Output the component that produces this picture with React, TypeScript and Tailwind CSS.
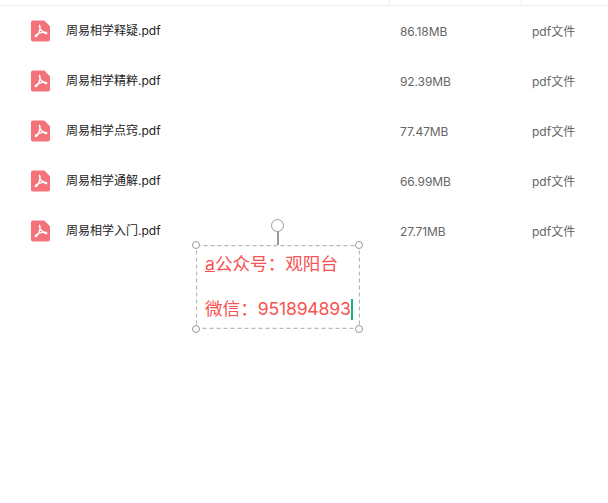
const files = [
  { name: '周易相学释疑.pdf', size: '86.18MB' },
  { name: '周易相学精粹.pdf', size: '92.39MB' },
  { name: '周易相学点窍.pdf', size: '77.47MB' },
  { name: '周易相学通解.pdf', size: '66.99MB' },
  { name: '周易相学入门.pdf', size: '27.71MB' },
];

function PdfIcon() {
  return (
    <svg width="19" height="22" viewBox="0 0 20 22" className="shrink-0">
      <path d="M2 0H14L20 6V20a2 2 0 0 1-2 2H2a2 2 0 0 1-2-2V2a2 2 0 0 1 2-2Z" fill="#f4737b" />
      <path
        d="M9 5c-.6 2.500 1.200 5.500 5.600 8.300 1.200.8 2.300.3 1.800-.4-.7-.8-3.800-.8-8.100.5-2.500.8-4.300 2.600-3.800 3.300.6.700 2.300-.4 3.500-3.400C9.300 10 10.100 6.500 9 5Z"
        fill="none"
        stroke="#fff"
        strokeWidth="1.400"
        strokeLinejoin="round"
      />
    </svg>
  );
}

function Handle({ className }: { className: string }) {
  return <span className={`absolute h-2 w-2 rounded-full border-[1.500px] border-[#999] bg-white ${className}`} />;
}

export default function App() {
  return (
    <div className="relative h-[503px] w-[608px] overflow-hidden bg-white font-['Inter','Noto_Sans_CJK_SC',sans-serif]">
      <div className="flex h-[6px] border-b border-[#eeeeee]">
        <div className="w-[390px] border-r border-[#eeeeee]" />
        <div className="w-[132px] border-r border-[#eeeeee]" />
      </div>

      {files.map((file) => (
        <div key={file.name} className="flex h-[50px] items-center">
          <div className="flex w-[390px] items-center pl-[31px]">
            <PdfIcon />
            <span className="ml-4 text-xs text-[#222]">{file.name}</span>
          </div>
          <div className="w-[132px] pl-[10px] pt-px text-xs tracking-[-0.1px] text-[#666]">{file.size}</div>
          <div className="pl-[10px] pt-px text-xs text-[#666]">pdf文件</div>
        </div>
      ))}

      <div className="absolute left-[196px] top-[245px] h-[84px] w-[163px]">
        <svg width="164" height="84" className="absolute left-0 top-0">
          <rect x="0.500" y="0.500" width="163" height="83" fill="none" stroke="#b8b8b8" strokeWidth="1.300" strokeDasharray="4 3" />
        </svg>
        <Handle className="-left-[4px] -top-[4px]" />
        <Handle className="-right-[4px] -top-[4px]" />
        <Handle className="-bottom-[4px] -left-[4px]" />
        <Handle className="-bottom-[4px] -right-[4px]" />
        <span className="absolute -top-[14px] left-[81px] h-[14px] w-[1.500px] bg-[#999]" />
        <span className="absolute -top-[26px] left-[75px] h-[13px] w-[13px] rounded-full border-[1.500px] border-[#999] bg-white" />
        <div className="relative whitespace-nowrap pl-[9px] pt-[6px] text-[17.600px] leading-[26px] text-[#f85252]">
          <div className="h-[26px]">
            <span className="underline">a</span>公众号：观阳台
          </div>
          <div className="mt-[19px] flex h-[26px] items-center">
            微信：<span className="tracking-[-0.2px]">951894893</span>
            <span className="h-[21px] w-[2px] bg-[#0dbb6c]" />
          </div>
        </div>
      </div>
    </div>
  );
}
